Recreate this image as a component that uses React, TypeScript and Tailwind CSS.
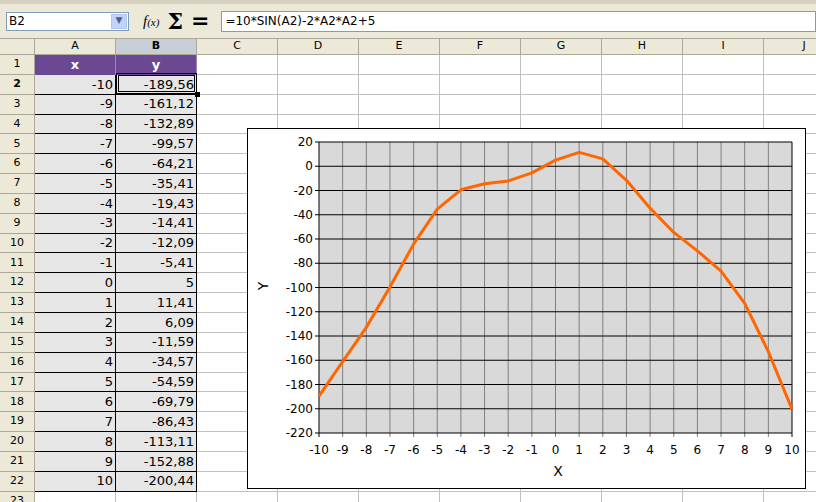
import React from "react";

const ys = [-189.56,-161.12,-132.89,-99.57,-64.21,-35.41,-19.43,-14.41,-12.09,-5.41,5,11.41,6.09,-11.59,-34.57,-54.59,-69.79,-86.43,-113.11,-152.88,-200.44];
const fmt = (v: number) => (Number.isInteger(v) ? String(v) : v.toFixed(2).replace(".", ","));
const cols = ["A","B","C","D","E","F","G","H","I","J"];

export default function App() {
  const px = (x: number) => 71 + ((x + 10) / 20) * 473;
  const py = (y: number) => 13 + ((20 - y) / 240) * 291;
  const pts = ys.map((y, i) => `${px(i - 10)},${py(y)}`).join(" ");
  return (
    <div className="relative w-[816px] h-[502px] overflow-hidden bg-white" style={{ fontFamily: "Tahoma, 'DejaVu Sans', sans-serif" }}>
      <div className="h-[38px] bg-[#ece9d8] border-t-[4px] border-[#d6d2c2] flex items-center text-[12px]">
        <div className="ml-[6px] w-[123px] h-[19px] bg-white border border-[#7f9db9] flex items-center justify-between pl-[2px]">
          <span>B2</span>
          <div className="w-[16px] h-[15px] mr-[1px] bg-[#c1d3fb] border border-[#b0c4ef] flex items-center justify-center text-[#4d6185] text-[9px]">▼</div>
        </div>
        <span className="ml-[14px] italic font-serif text-[15px]" style={{ fontFamily: "'Liberation Serif', serif" }}>f<span className="text-[11px]">(x)</span></span>
        <span className="ml-[8px] text-[22px] font-bold" style={{ fontFamily: "'DejaVu Serif', serif" }}>Σ</span>
        <span className="ml-[8px] text-[22px] font-bold leading-none">=</span>
        <div className="ml-[12px] flex-1 h-[21px] bg-white border border-[#7f9db9] flex items-center pl-[3px] text-[12px]" style={{ fontFamily: "'DejaVu Sans', sans-serif" }}>=10*SIN(A2)-2*A2*A2+5</div>
      </div>
      <div className="h-[1px] bg-[#aca899]" />
      <div className="flex h-[16px] bg-[#ece9d8] text-[11px] border-b border-[#aca899]" style={{ fontFamily: "'DejaVu Sans', sans-serif" }}>
        <div className="w-[35px] shrink-0 border-r border-[#aca899]" />
        {cols.map((c) => (
          <div key={c} className={`w-[81px] shrink-0 border-r border-[#aca899] flex items-center justify-center ${c === "B" ? "bg-[#c8ced6] font-bold" : ""}`}>{c}</div>
        ))}
      </div>
      {Array.from({ length: 23 }, (_, r) => {
        const row = r + 1;
        return (
          <div key={row} className="flex h-[19.85px] text-[13px]" style={{ fontFamily: "'DejaVu Sans', sans-serif" }}>
            <div className={`w-[35px] shrink-0 bg-[#ece9d8] border-r border-b border-[#aca899] flex items-center justify-center text-[11px] ${row === 2 ? "bg-[#c8ced6] font-bold" : ""}`}>{row}</div>
            {cols.map((c, ci) => {
              let cls = "border-r border-b border-[#c0c0c0]";
              let txt: React.ReactNode = null;
              if (row === 1 && ci < 2) {
                cls = "bg-[#6b4894] text-white font-bold justify-center border-r border-[#9a84b8]";
                txt = ci === 0 ? "x" : "y";
              } else if (row >= 2 && row <= 22 && ci < 2) {
                cls = "bg-[#e6e6e6] border-r border-b border-black justify-end pr-[2px]";
                txt = ci === 0 ? String(row - 12) : fmt(ys[row - 2]);
              }
              return <div key={c} className={`w-[81px] shrink-0 flex items-center ${cls}`}>{txt}</div>;
            })}
          </div>
        );
      })}
      <div className="absolute left-[116px] top-[73px] w-[81px] h-[21px] border border-black pointer-events-none">
        <div className="absolute inset-[1px] border border-black" />
        <div className="absolute -right-[4px] -bottom-[4px] w-[5px] h-[5px] bg-black" />
      </div>
      <div className="absolute left-[247px] top-[128px] w-[559px] h-[361px] bg-white border border-black">
        <svg width="557" height="359" style={{ fontFamily: "'DejaVu Sans', sans-serif" }} fontSize="12">
          <rect x={71} y={13} width={473} height={291} fill="#d9d9d9" />
          {Array.from({ length: 21 }, (_, i) => (
            <g key={"x" + i}>
              <line x1={px(i - 10)} x2={px(i - 10)} y1={13} y2={308} stroke={i === 0 || i === 20 ? "#000" : "#808080"} strokeWidth={1} />
              <text x={px(i - 10)} y={325} textAnchor="middle">{i - 10}</text>
            </g>
          ))}
          {Array.from({ length: 13 }, (_, i) => {
            const v = 20 - i * 20;
            return (
              <g key={"y" + i}>
                <line x1={67} x2={544} y1={py(v)} y2={py(v)} stroke="#000" />
                <text x={65} y={py(v) + 4} textAnchor="end">{v}</text>
              </g>
            );
          })}
          <polyline points={pts} fill="none" stroke="#ff6600" strokeWidth={3} strokeLinejoin="round" />
          <text x={310} y={347} textAnchor="middle" fontSize="14">X</text>
          <text x={20} y={157} textAnchor="middle" fontSize="14" transform="rotate(-90 20 157)">Y</text>
        </svg>
      </div>
    </div>
  );
}
